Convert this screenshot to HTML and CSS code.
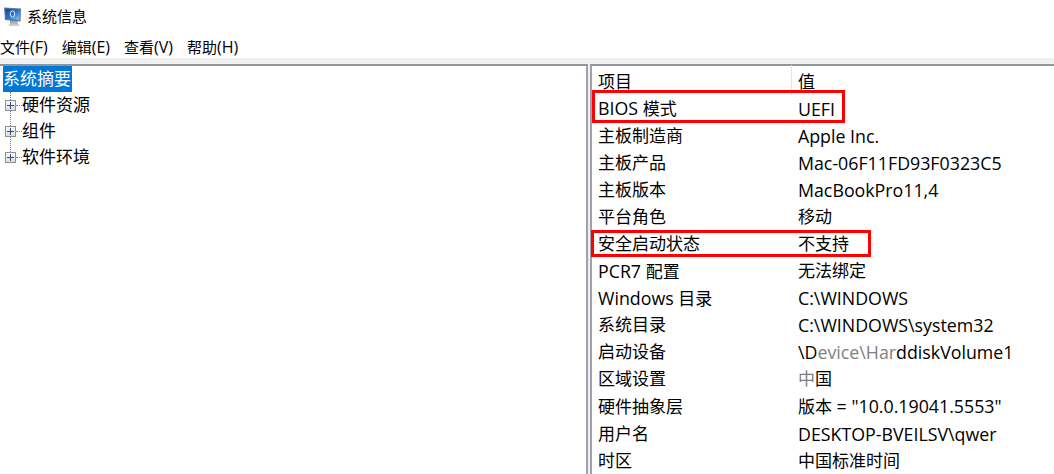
FILE: index.html
```html
<!DOCTYPE html>
<html lang="zh-CN">
<head>
<meta charset="utf-8">
<title>系统信息</title>
<link rel="stylesheet" href="styles.css">
</head>
<body>
<div class="app">
  <header class="titlebar">
    <svg class="app-icon" width="22" height="22" viewBox="0 0 22 22">
      <defs>
        <linearGradient id="scr" x1="0" y1="0" x2="1" y2="1">
          <stop offset="0" stop-color="#15409c"/>
          <stop offset="0.55" stop-color="#2a78d0"/>
          <stop offset="1" stop-color="#9accf0"/>
        </linearGradient>
        <linearGradient id="base" x1="0" y1="0" x2="0" y2="1">
          <stop offset="0" stop-color="#8e9498"/>
          <stop offset="1" stop-color="#d4d7d9"/>
        </linearGradient>
      </defs>
      <path d="M8 15h7l1 3.500 2 2.500H6l2-2.500z" fill="url(#base)"/>
      <path d="M2 2.500L19 3.500 18.500 16.500 3 15z" fill="#5f7590"/>
      <path d="M3.300 3.700L17.800 4.600 17.400 15 4.200 13.800z" fill="url(#scr)"/>
      <ellipse cx="10.500" cy="9" rx="2.200" ry="3.200" fill="none" stroke="#dcebf8" stroke-width="1"/>
    </svg>
    <span class="title-text">系统信息</span>
  </header>
  <nav class="menubar">
    <span>文件<span class="lat">(F)</span></span><span>编辑<span class="lat">(E)</span></span><span>查看<span class="lat">(V)</span></span><span>帮助<span class="lat">(H)</span></span>
  </nav>
  <main class="panes">
    <section class="tree">
      <div class="tree-root"><span class="selected">系统摘要</span></div>
      <ul class="tree-list">
        <li class="tree-item"><span class="expander"></span><span class="tick"></span><span>硬件资源</span></li>
        <li class="tree-item"><span class="expander"></span><span class="tick"></span><span>组件</span></li>
        <li class="tree-item"><span class="expander"></span><span class="tick"></span><span>软件环境</span></li>
      </ul>
    </section>
    <section class="details">
      <div class="row head"><span class="c1">项目</span><span class="sep"></span><span class="c2">值</span></div>
      <div class="row"><span class="c1"><span class="lat">BIOS </span>模式</span><span class="c2 lat">UEFI</span></div>
      <div class="row"><span class="c1">主板制造商</span><span class="c2 lat">Apple Inc.</span></div>
      <div class="row"><span class="c1">主板产品</span><span class="c2 lat">Mac-06F11FD93F0323C5</span></div>
      <div class="row"><span class="c1">主板版本</span><span class="c2 lat">MacBookPro11,4</span></div>
      <div class="row"><span class="c1">平台角色</span><span class="c2">移动</span></div>
      <div class="row"><span class="c1">安全启动状态</span><span class="c2">不支持</span></div>
      <div class="row"><span class="c1"><span class="lat">PCR7 </span>配置</span><span class="c2">无法绑定</span></div>
      <div class="row"><span class="c1"><span class="lat">Windows </span>目录</span><span class="c2 lat">C:\WINDOWS</span></div>
      <div class="row"><span class="c1">系统目录</span><span class="c2 lat">C:\WINDOWS\system32</span></div>
      <div class="row"><span class="c1">启动设备</span><span class="c2 lat">\D<span class="faded">evice\Har</span>ddiskVolume1</span></div>
      <div class="row"><span class="c1">区域设置</span><span class="c2"><span class="faded">中</span>国</span></div>
      <div class="row"><span class="c1">硬件抽象层</span><span class="c2">版本<span class="lat"> = "10.0.19041.5553"</span></span></div>
      <div class="row"><span class="c1">用户名</span><span class="c2 lat">DESKTOP-BVEILSV\qwer</span></div>
      <div class="row"><span class="c1">时区</span><span class="c2">中国标准时间</span></div>
    </section>
  </main>
  <div class="mark mark-bios"></div>
  <div class="mark mark-boot"></div>
</div>
</body>
</html>
```
FILE: styles.css
```css
* { box-sizing: border-box; }
html, body { margin: 0; padding: 0; background: #fff; }
body {
  font-family: "Open Sans", "Noto Sans CJK SC", sans-serif;
  color: #000;
  overflow: hidden;
}
.app {
  position: relative;
  width: 1054px;
  height: 474px;
  display: flex;
  flex-direction: column;
  overflow: hidden;
}
.titlebar {
  height: 35px;
  display: flex;
  align-items: center;
  gap: 3px;
  padding-left: 2px;
  font-size: 15px;
}
.app-icon { flex: none; margin-top: -4px; }
.title-text { line-height: 35px; margin-top: -3px; }
.menubar {
  height: 23px;
  display: flex;
  gap: 14px;
  font-size: 15px;
  line-height: 25px;
  white-space: nowrap;
}
.menubar .lat { font-size: 16px; }
.panes {
  flex: 1;
  min-height: 0;
  display: flex;
  gap: 2px;
  background: #f0f0f0;
  padding-top: 6px;
}
.tree, .details {
  background: #fff;
  border-top: 2px solid #8e959c;
  font-size: 17px;
  white-space: nowrap;
}
.tree {
  width: 588px;
  flex: none;
  border-right: 2px solid #a0a0a8;
}
.details {
  flex: 1;
  min-width: 0;
  border-left: 2px solid #a0a0a8;
  padding-top: 2px;
}
.tree-root { height: 26px; padding-left: 3px; }
.selected {
  display: inline-block;
  height: 26px;
  width: 69px;
  background: #0078d7;
  color: #fff;
  line-height: 26px;
  vertical-align: top;
}
.tree-list {
  position: relative;
  list-style: none;
  margin: 0;
  padding: 0;
}
.tree-list::before {
  content: "";
  position: absolute;
  left: 10px;
  top: 0;
  height: 66px;
  border-left: 1px dotted #808080;
}
.tree-item {
  position: relative;
  height: 26px;
  display: flex;
  align-items: center;
  padding-left: 5px;
  line-height: 26px;
}
.expander {
  position: relative;
  flex: none;
  width: 11px;
  height: 11px;
  border: 1px solid #919191;
  background: linear-gradient(#fafafa, #dcdcdc);
}
.expander::before {
  content: "";
  position: absolute;
  left: 1px;
  top: 4px;
  width: 7px;
  height: 1px;
  background: #2f4d8f;
}
.expander::after {
  content: "";
  position: absolute;
  left: 4px;
  top: 1px;
  width: 1px;
  height: 7px;
  background: #2f4d8f;
}
.tick {
  flex: none;
  width: 6px;
  border-top: 1px dotted #808080;
}
.row {
  position: relative;
  height: 27.1px;
  display: flex;
  align-items: center;
  padding-left: 6px;
  line-height: 26px;
}
.row .lat { font-size: 17.8px; }
.head { height: 27px; }
.c1 { width: 200px; flex: none; }
.c2 { flex: none; }
.sep {
  position: absolute;
  left: 199px;
  top: -3px;
  height: 30px;
  width: 1px;
  background: #e5e5e5;
}
.faded { color: #808080; }
.mark {
  position: absolute;
  border: 3px solid #f00;
  pointer-events: none;
}
.mark-bios { left: 592px; top: 90px; width: 253px; height: 33px; }
.mark-boot { left: 591px; top: 230px; width: 280px; height: 27px; }
```
